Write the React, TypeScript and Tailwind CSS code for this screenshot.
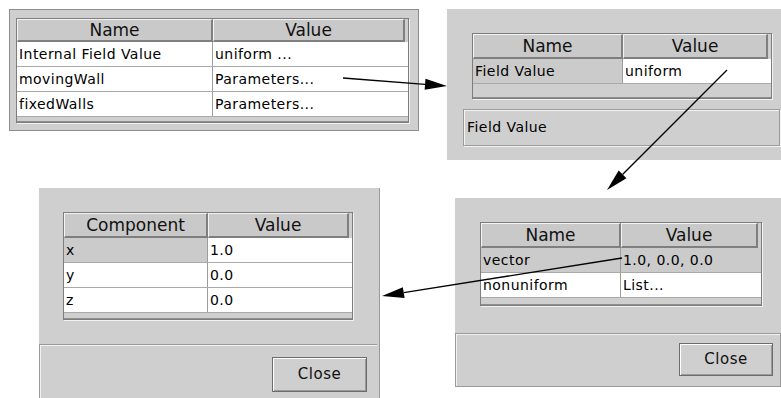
import React from 'react';

type Row = { cells: [string, string]; shade?: [boolean, boolean] };

interface TableProps {
  width: string;
  col: string;
  headH: string;
  strip: string;
  head: [string, string];
  rows: Row[];
}

const Table: React.FC<TableProps> = ({ width, col, headH, strip, head, rows }) => (
  <div className={`${width} flex flex-col border border-[#7d7d7d] bg-[#cfcfcf] shadow-[1px_1px_0_#f2f2f2]`}>
    <div className={`${headH} flex`}>
      {head.map((h, i) => (
        <div
          key={h}
          className={`${i === 0 ? col : 'flex-1 mr-[3px]'} flex items-center justify-center border-t border-l border-b-2 border-r-2 border-t-[#f4f4f4] border-l-[#f4f4f4] border-b-[#7f7f7f] border-r-[#7f7f7f] bg-[#c9c9c9] text-[17px] leading-none text-[#111]`}
        >
          {h}
        </div>
      ))}
    </div>
    {rows.map((r, ri) => (
      <div key={ri} className="flex h-[25px] border-b border-[#a9a9a9]">
        {r.cells.map((c, ci) => (
          <div
            key={ci}
            className={`${ci === 0 ? `${col} border-r border-[#9c9c9c]` : 'flex-1'} ${r.shade && r.shade[ci] ? 'bg-[#cbcbcb]' : 'bg-white'} flex items-center pl-[2px] pt-[1px] text-[14px] tracking-[0.45px] text-black`}
          >
            {c}
          </div>
        ))}
      </div>
    ))}
    <div className={`${strip} border-b border-[#8f8f8f]`} />
  </div>
);

const CloseButton: React.FC<{ size: string }> = ({ size }) => (
  <div className={`${size} flex items-center justify-center border border-[#6c6c6c] shadow-[inset_1px_1px_0_#ffffff,inset_-1px_-1px_0_#9a9a9a] bg-[#cfcfcf] text-[15px] tracking-[0.5px] text-[#111]`}>
    Close
  </div>
);

function arrowHead(x1: number, y1: number, x2: number, y2: number, len: number, half: number) {
  const dx = x2 - x1;
  const dy = y2 - y1;
  const d = Math.hypot(dx, dy);
  const ux = dx / d;
  const uy = dy / d;
  const bx = x2 - ux * len;
  const by = y2 - uy * len;
  return {
    base: [bx, by],
    pts: `${x2},${y2} ${bx - uy * half},${by + ux * half} ${bx + uy * half},${by - ux * half}`,
  };
}

const Arrow: React.FC<{ x1: number; y1: number; x2: number; y2: number }> = ({ x1, y1, x2, y2 }) => {
  const a = arrowHead(x1, y1, x2, y2, 22, 5.5);
  return (
    <g>
      <line x1={x1} y1={y1} x2={a.base[0]} y2={a.base[1]} stroke="#000" strokeWidth={1.3} />
      <polygon points={a.pts} fill="#000" />
    </g>
  );
};

export default function App() {
  return (
    <div className="relative w-[781px] h-[398px] overflow-hidden bg-white font-['DejaVu_Sans',sans-serif]">
      {/* top left window */}
      <div className="absolute left-[9px] top-[9px] w-[410px] h-[122px] bg-[#cfcfcf] border border-[#8d8d8d] pl-[6px] pt-[8px]">
        <Table
          width="w-[393px]"
          col="w-[196px]"
          headH="h-[23px]"
          strip="h-[5px]"
          head={['Name', 'Value']}
          rows={[
            { cells: ['Internal Field Value', 'uniform ...'] },
            { cells: ['movingWall', 'Parameters...'] },
            { cells: ['fixedWalls', 'Parameters...'] },
          ]}
        />
      </div>

      {/* top right window */}
      <div className="absolute left-[447px] top-[9px] w-[334px] h-[151px] bg-[#cfcfcf] flex flex-col pl-[25px] pt-[24px]">
        <Table
          width="w-[300px]"
          col="w-[150px]"
          headH="h-[25px]"
          strip="h-[14px]"
          head={['Name', 'Value']}
          rows={[{ cells: ['Field Value', 'uniform'], shade: [true, false] }]}
        />
        <div className="mt-[10px] -ml-[9px] w-[317px] h-[37px] flex items-center pl-[3px] border border-[#9b9b9b] shadow-[inset_1px_1px_0_#f4f4f4,1px_1px_0_#f4f4f4] text-[14px] tracking-[0.45px] text-black">
          Field Value
        </div>
      </div>

      {/* bottom left window */}
      <div className="absolute left-[39px] top-[188px] w-[341px] h-[210px] bg-[#cfcfcf] border-r border-[#9a9a9a] flex flex-col">
        <div className="pl-[24px] pt-[24px]">
          <Table
            width="w-[290px]"
            col="w-[144px]"
            headH="h-[25px]"
            strip="h-[6px]"
            head={['Component', 'Value']}
            rows={[
              { cells: ['x', '1.0'], shade: [true, false] },
              { cells: ['y', '0.0'] },
              { cells: ['z', '0.0'] },
            ]}
          />
        </div>
        <div className="mt-[24px] mr-[2px] flex-1 flex justify-end pt-[12px] pr-[10px] border-t border-l border-[#9a9a9a] shadow-[inset_1px_1px_0_#f2f2f2]">
          <CloseButton size="w-[95px] h-[35px]" />
        </div>
      </div>

      {/* bottom right window */}
      <div className="absolute left-[455px] top-[198px] w-[326px] h-[189px] bg-[#cfcfcf] flex flex-col">
        <div className="pl-[25px] pt-[24px]">
          <Table
            width="w-[282px]"
            col="w-[140px]"
            headH="h-[25px]"
            strip="h-[7px]"
            head={['Name', 'Value']}
            rows={[
              { cells: ['vector', '1.0, 0.0, 0.0'], shade: [true, true] },
              { cells: ['nonuniform', 'List...'] },
            ]}
          />
        </div>
        <div className="mt-[27px] flex-1 flex justify-end pt-[9px] pr-[7px] border border-[#9a9a9a] shadow-[inset_1px_1px_0_#f2f2f2]">
          <CloseButton size="w-[94px] h-[33px]" />
        </div>
      </div>

      {/* arrows */}
      <svg className="absolute left-0 top-0 pointer-events-none" width={781} height={398}>
        <Arrow x1={343} y1={78} x2={447} y2={86} />
        <Arrow x1={727} y1={70} x2={607} y2={190} />
        <Arrow x1={622} y1={258} x2={382} y2={296} />
      </svg>
    </div>
  );
}
